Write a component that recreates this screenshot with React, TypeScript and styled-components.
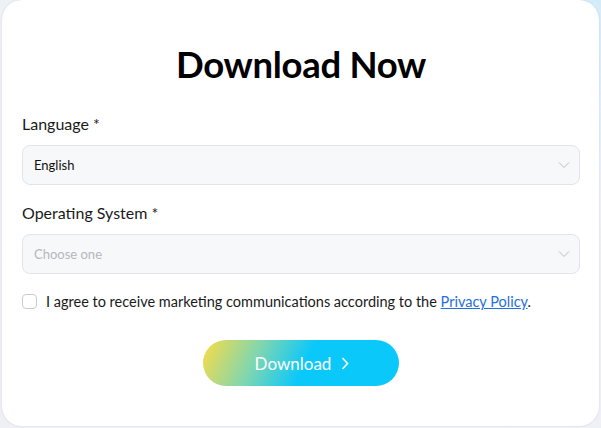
import React from "react";
import styled, { createGlobalStyle } from "styled-components";

const Global = createGlobalStyle`
  html, body { margin: 0; padding: 0; }
  body {
    width: 601px;
    height: 428px;
    overflow: hidden;
    background: linear-gradient(200deg, #d3ecfa 0%, #eef1f6 30%, #eef0f5 100%);
    font-family: "Lato", "Liberation Sans", sans-serif;
  }
`;

const Page = styled.div`
  display: flex;
  padding: 0 2px 2px 2px;
  height: 428px;
  box-sizing: border-box;
`;

const Card = styled.div`
  flex: 1;
  background: #fff;
  border-radius: 20px;
  padding: 40px 19px 0 20px;
  box-shadow: 0 0 2px rgba(120, 130, 150, 0.25);
  display: flex;
  flex-direction: column;
`;

const Title = styled.h1`
  margin: 0 0 26px;
  text-align: center;
  font-family: "Lato", "Liberation Sans", sans-serif;
  font-weight: 700;
  font-size: 36.5px;
  line-height: 48px;
  color: #000;
  letter-spacing: -0.3px;
`;

const Label = styled.label`
  display: block;
  font-size: 16px;
  line-height: 20px;
  color: #1a1a1a;
  margin-bottom: 11px;
`;

const Field = styled.div`
  margin-bottom: 18px;
`;

const Select = styled.div<{ $placeholder?: boolean }>`
  height: 40px;
  box-sizing: border-box;
  border: 1px solid #e2e4e8;
  border-radius: 8px;
  background: #f7f8fa;
  display: flex;
  align-items: center;
  justify-content: space-between;
  padding: 0 9px 0 11px;
  font-size: 13px;
  color: ${(p) => (p.$placeholder ? "#b4b7bd" : "#111")};
`;

const Chevron = () => (
  <svg width="12" height="8" viewBox="0 0 12 8" fill="none">
    <path d="M1 1.5 L6 6.5 L11 1.5" stroke="#b8bcc2" strokeWidth="1" />
  </svg>
);

const Agree = styled.div`
  display: flex;
  align-items: center;
  gap: 9px;
  margin-top: 1px;
  font-size: 14.5px;
  color: #1a1a1a;
`;

const Box = styled.span`
  width: 15px;
  height: 15px;
  box-sizing: border-box;
  border: 1px solid #c9ccd1;
  border-radius: 4px;
  background: #fff;
  flex: none;
`;

const Link = styled.a`
  color: #1f6fe0;
  text-decoration: underline;
`;

const ButtonRow = styled.div`
  display: flex;
  justify-content: center;
  margin-top: 30px;
`;

const Button = styled.button`
  width: 196px;
  height: 46px;
  border: none;
  border-radius: 23px;
  background: linear-gradient(115deg, #fbdc45 0%, #7fd6b0 28%, #0bc8fb 52%, #0bc8fb 100%);
  color: #fff;
  font-family: "Lato", "Liberation Sans", sans-serif;
  font-size: 17px;
  display: flex;
  align-items: center;
  justify-content: center;
  gap: 10px;
  padding: 0 0 0 2px;
`;

export default function App() {
  return (
    <>
      <Global />
      <Page>
        <Card>
          <Title>Download Now</Title>
          <Field>
            <Label>Language *</Label>
            <Select>
              English
              <Chevron />
            </Select>
          </Field>
          <Field>
            <Label>Operating System *</Label>
            <Select $placeholder>
              Choose one
              <Chevron />
            </Select>
          </Field>
          <Agree>
            <Box />
            <span>
              I agree to receive marketing communications according to the{" "}
              <Link href="#">Privacy Policy</Link>.
            </span>
          </Agree>
          <ButtonRow>
            <Button>
              Download
              <svg width="8" height="13" viewBox="0 0 8 13" fill="none">
                <path d="M1.5 1 L6.5 6.5 L1.5 12" stroke="#fff" strokeWidth="1.6" />
              </svg>
            </Button>
          </ButtonRow>
        </Card>
      </Page>
    </>
  );
}
